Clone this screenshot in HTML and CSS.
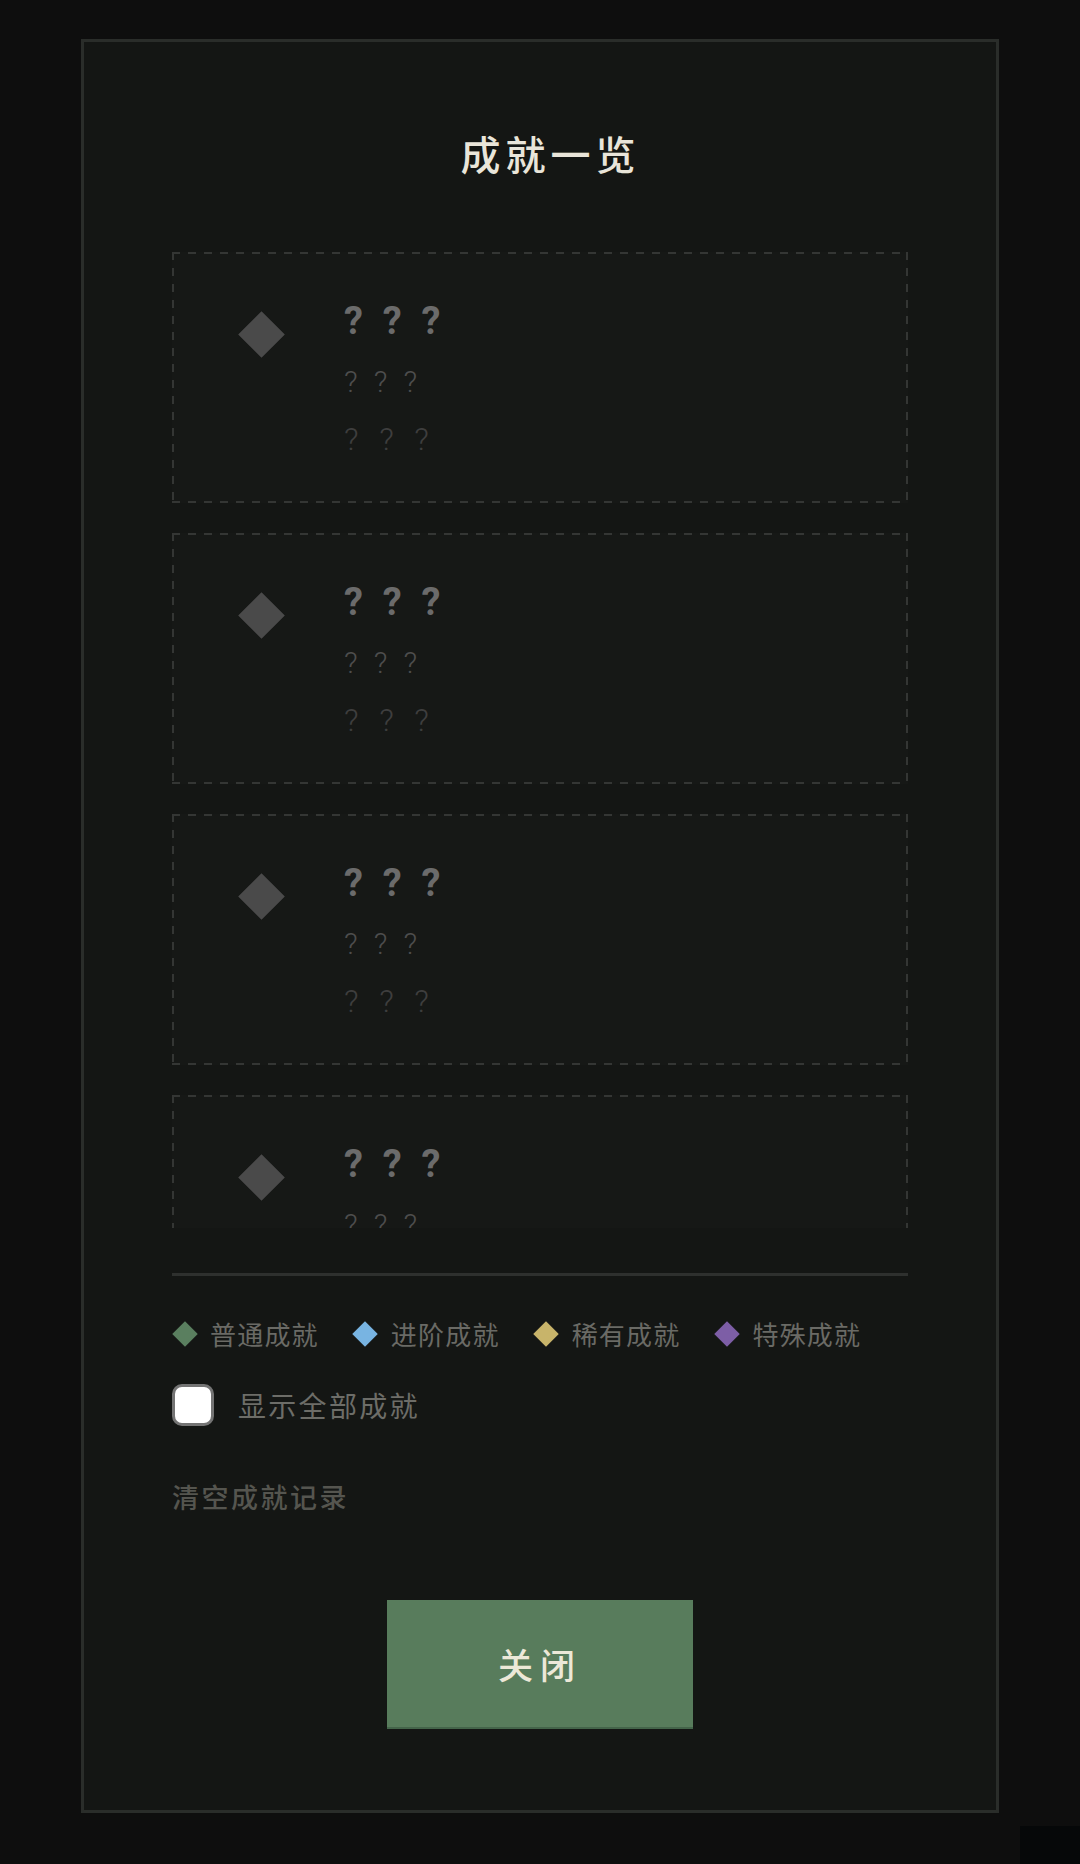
FILE: index.html
```html
<!DOCTYPE html>
<html lang="zh-CN">
<head>
<meta charset="utf-8">
<title>成就一览</title>
<link rel="stylesheet" href="styles.css">
</head>
<body>
<div class="screen">
  <div class="panel">
    <h1 class="title">成就一览</h1>
    <div class="list">
      <div class="card">
        <div class="gem-box"><span class="gem"></span></div>
        <div class="info">
          <div class="name">? ? ?</div>
          <div class="desc">? ? ?</div>
          <div class="hint">? ? ?</div>
        </div>
      </div>
      <div class="card">
        <div class="gem-box"><span class="gem"></span></div>
        <div class="info">
          <div class="name">? ? ?</div>
          <div class="desc">? ? ?</div>
          <div class="hint">? ? ?</div>
        </div>
      </div>
      <div class="card">
        <div class="gem-box"><span class="gem"></span></div>
        <div class="info">
          <div class="name">? ? ?</div>
          <div class="desc">? ? ?</div>
          <div class="hint">? ? ?</div>
        </div>
      </div>
      <div class="card">
        <div class="gem-box"><span class="gem"></span></div>
        <div class="info">
          <div class="name">? ? ?</div>
          <div class="desc">? ? ?</div>
          <div class="hint">? ? ?</div>
        </div>
      </div>
    </div>
    <div class="divider"></div>
    <div class="legend">
      <div class="legend-item"><span class="mark"><span class="dot dot-common"></span></span><span class="legend-text">普通成就</span></div>
      <div class="legend-item"><span class="mark"><span class="dot dot-advanced"></span></span><span class="legend-text">进阶成就</span></div>
      <div class="legend-item"><span class="mark"><span class="dot dot-rare"></span></span><span class="legend-text">稀有成就</span></div>
      <div class="legend-item"><span class="mark"><span class="dot dot-special"></span></span><span class="legend-text">特殊成就</span></div>
    </div>
    <label class="toggle"><input class="check" type="checkbox"><span class="toggle-text">显示全部成就</span></label>
    <div class="clear">清空成就记录</div>
    <div class="actions"><button class="close" type="button">关闭</button></div>
  </div>
  <div class="corner"></div>
</div>
</body>
</html>
```

FILE: styles.css
```css
* { box-sizing: border-box; }

html, body {
  margin: 0;
  padding: 0;
  background: #0e0e0e;
}

body {
  font-family: Roboto, "Noto Sans CJK SC", sans-serif;
}

.screen {
  position: relative;
  width: 1080px;
  height: 1864px;
  padding: 39px 81px 0 81px;
  background: #0e0e0e;
}

.panel {
  height: 1774px;
  border: 3px solid #2a2d2a;
  background: #141614;
  padding: 0 88px;
  display: flex;
  flex-direction: column;
}

.title {
  margin: 91px 0 0 0;
  padding-left: 21px;
  text-align: center;
  font-family: "Noto Sans CJK SC", sans-serif;
  font-size: 40px;
  line-height: 40px;
  font-weight: 500;
  letter-spacing: 5px;
  color: #e9e5d9;
}

.list {
  margin-top: 79px;
  height: 976px;
  overflow: hidden;
  display: flex;
  flex-direction: column;
  gap: 30px;
  flex-shrink: 0;
}

.card {
  flex-shrink: 0;
  height: 251px;
  display: flex;
  align-items: flex-start;
  padding: 47px 0 0 66px;
  gap: 59px;
  background-color: #161816;
  background-image:
    repeating-linear-gradient(90deg, #343634 0 8px, transparent 8px 16px),
    repeating-linear-gradient(90deg, #343634 0 8px, transparent 8px 16px),
    repeating-linear-gradient(180deg, #343634 0 8px, transparent 8px 16px),
    repeating-linear-gradient(180deg, #343634 0 8px, transparent 8px 16px);
  background-size: 100% 2px, 100% 2px, 2px 100%, 2px 100%;
  background-position: left top, left bottom, left top, right top;
  background-repeat: no-repeat;
}

.gem-box {
  width: 47px;
  height: 47px;
  margin-top: 12px;
  display: flex;
  align-items: center;
  justify-content: center;
  flex-shrink: 0;
}

.gem {
  display: block;
  width: 33px;
  height: 33px;
  background: #4a4a4a;
  transform: rotate(45deg);
}

.info {
  display: flex;
  flex-direction: column;
}

.name {
  font-size: 38px;
  line-height: 44px;
  font-weight: 700;
  letter-spacing: 5.2px;
  color: #6b6b6b;
}

.desc {
  margin-top: 21px;
  font-size: 30px;
  line-height: 36px;
  font-weight: 300;
  letter-spacing: 4.4px;
  color: #4d4d4d;
}

.hint {
  margin-top: 20px;
  font-size: 32px;
  line-height: 38px;
  font-weight: 300;
  letter-spacing: 6.4px;
  color: #3e3e3e;
}

.divider {
  margin-top: 45px;
  height: 3px;
  background: #2e302e;
  flex-shrink: 0;
}

.legend {
  margin-top: 40px;
  height: 36px;
  display: flex;
  align-items: center;
  gap: 34px;
}

.legend-item {
  display: flex;
  align-items: center;
  gap: 13px;
}

.mark {
  width: 25px;
  height: 25px;
  display: flex;
  align-items: center;
  justify-content: center;
}

.dot {
  display: block;
  width: 18px;
  height: 18px;
  transform: rotate(45deg);
}

.dot-common { background: #5a7f5f; }
.dot-advanced { background: #78b4e2; }
.dot-rare { background: #c8b46a; }
.dot-special { background: #7d5ea6; }

.legend-text {
  font-family: "Noto Sans CJK SC", sans-serif;
  font-size: 26px;
  line-height: 36px;
  letter-spacing: 1.2px;
  color: #6a6a65;
}

.toggle {
  margin-top: 32px;
  height: 42px;
  display: flex;
  align-items: center;
  gap: 24px;
}

.check {
  appearance: none;
  -webkit-appearance: none;
  margin: 0;
  width: 42px;
  height: 42px;
  border: 3px solid #747474;
  border-radius: 10px;
  background: #ffffff;
  flex-shrink: 0;
}

.toggle-text {
  font-family: "Noto Sans CJK SC", sans-serif;
  font-size: 28px;
  line-height: 42px;
  letter-spacing: 2.3px;
  color: #6d6d68;
}

.clear {
  margin-top: 54px;
  font-family: "Noto Sans CJK SC", sans-serif;
  font-size: 27px;
  line-height: 34px;
  font-weight: 500;
  letter-spacing: 2.5px;
  color: #55554f;
}

.actions {
  margin-top: 86px;
  display: flex;
  justify-content: center;
}

.close {
  width: 306px;
  height: 129px;
  border: none;
  border-bottom: 2px solid #44644a;
  background: #587c5c;
  color: #ece8d8;
  font-family: "Noto Sans CJK SC", sans-serif;
  font-size: 35px;
  font-weight: 500;
  letter-spacing: 7px;
  padding: 0;
  display: flex;
  align-items: center;
  justify-content: center;
}

.corner {
  position: absolute;
  right: 0;
  bottom: 0;
  width: 60px;
  height: 38px;
  background: #060809;
}
```
